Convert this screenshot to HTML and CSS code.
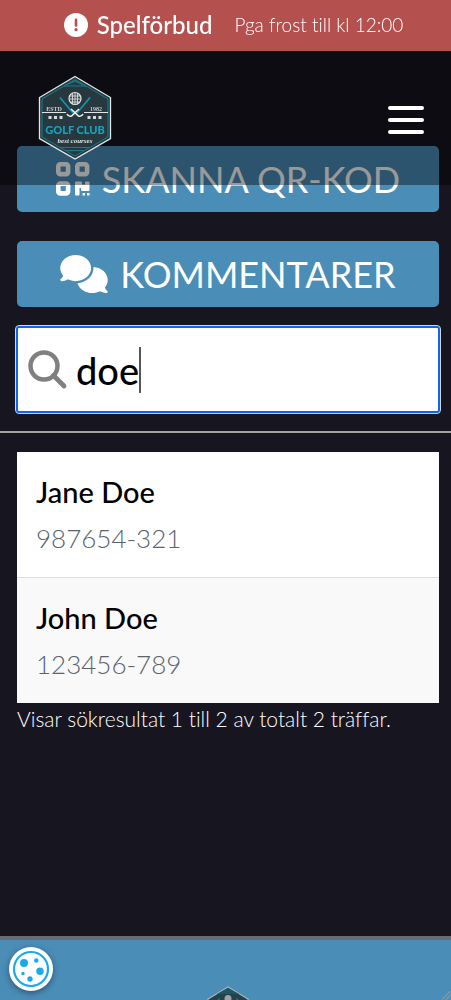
FILE: index.html
```html
<!DOCTYPE html>
<html lang="sv">
<head>
<meta charset="utf-8">
<meta name="viewport" content="width=device-width, initial-scale=1">
<title>Golf Club</title>
<link rel="stylesheet" href="styles.css">
</head>
<body>
<div class="top">
  <div class="alert" role="alert">
    <svg class="alert-icon" viewBox="0 0 24 24" aria-hidden="true"><circle cx="12" cy="12" r="12" fill="#fff"/><path d="M12 6.8v5.7" stroke="#b4514f" stroke-width="2.6" stroke-linecap="round"/><circle cx="12" cy="16.7" r="1.6" fill="#b4514f"/></svg>
    <strong class="alert-title">Spelförbud</strong>
    <span class="alert-text">Pga frost till kl 12:00</span>
  </div>
  <header class="header">
    <a class="brand" href="#" aria-label="Golf Club">
      <svg class="brand-logo" viewBox="8 5 74 85" aria-hidden="true">
        <path d="M45 6.5 80.5 27.5V68.500L45 89 9.500 68.500V27.500Z" fill="#27383f" stroke="#e4e8ea" stroke-width="1.3"/>
        <path d="M45 9.500 78 29V67L45 86 12 67V29Z" fill="none" stroke="#137e91" stroke-width="1"/>
        <path d="M34 16H56M38 14 45 11l7 3M34 16l11-5 11 5M30 77.500H60M35 80.500H55" fill="none" stroke="#137e91" stroke-width="1"/>
        <circle cx="45" cy="28.500" r="6" fill="#3a474c" stroke="#e1e5e6" stroke-width="1.200"/>
        <path d="M39.500 26h11M39 29h12M40 32h10M42.500 23v11M45 22.500v12M47.500 23v11" stroke="#d8dddf" stroke-width=".9"/>
        <path d="M30 27.500 43 43M60 27.500 47 43" stroke="#0c9bb5" stroke-width="1.600"/>
        <path d="M49 39 41.500 46q-3 1-4.500-2M41 39 48.500 46q3 1 4.500-2" fill="none" stroke="#eceeef" stroke-width="1.600"/>
        <path d="M12 42.500H36M54 42.500H78" stroke="#e0e5e7" stroke-width="1"/>
        <g fill="#d6dcde"><path d="M18.500 46h3v3h-3zM24 46h3v3h-3zM29.500 46h3v3h-3zM57.500 46h3v3h-3zM63 46h3v3h-3zM68.500 46h3v3h-3z"/></g>
        <g class="logo-small"><text x="24" y="41">ESTD</text><text x="66" y="41">1982</text></g>
        <text class="logo-name" x="45" y="64">GOLF CLUB</text>
        <text class="logo-script" x="45" y="73">best courses</text>
      </svg>
    </a>
    <button class="menu" type="button" aria-label="Meny"><span class="menu-line"></span><span class="menu-line"></span><span class="menu-line"></span></button>
  </header>
</div>

<main class="main">
  <div class="actions">
    <button class="action" type="button">
      <svg class="icon-qr" viewBox="0 0 34 34" aria-hidden="true"><g fill="none" stroke="#fff" stroke-width="4.600"><rect x="2.300" y="2.300" width="9.800" height="9.800" rx="2"/><rect x="21.300" y="2.300" width="9.800" height="9.800" rx="2"/><rect x="2.300" y="21.600" width="9.800" height="9.800" rx="2"/></g><path fill="#fff" d="M19 20.500q0-1 1-1h5q1 0 1 1v2h3v-2q0-1 1-1h2.500q1 0 1 1V28q0 1-1 1H26q-1 0-1-1v-2h-1.500v6.500q0 1-1 1H20q-1 0-1-1zM26.500 31h2.600v2.600h-2.600zM31 31h2.600v2.600H31z"/></svg>
      <span>SKANNA QR-KOD</span>
    </button>
    <button class="action" type="button">
      <svg class="icon-chat" viewBox="0 0 640 512" aria-hidden="true"><path fill="#fff" d="M208 352c114.900 0 208-78.800 208-176S322.900 0 208 0 0 78.800 0 176c0 38.600 14.700 74.300 39.600 103.400-3.500 9.400-8.700 17.700-14.200 24.700-4.800 6.200-9.700 11-13.300 14.300-1.800 1.600-3.300 2.900-4.300 3.700l-1.100.8C1 327.200-1.400 334.400.8 340.900S9.100 352 16 352c21.800 0 43.800-5.600 62.100-12.500 9.200-3.500 17.800-7.400 25.300-11.400C134.100 343.300 169.800 352 208 352zM448 176c0 112.300-99.100 196.900-216.500 207C255.800 457.400 336.400 512 432 512c38.200 0 73.900-8.700 104.700-23.900 7.500 4 16 7.900 25.200 11.400 18.300 6.900 40.300 12.500 62.100 12.500 6.900 0 13.100-4.500 15.200-11.100 2.100-6.600-.2-13.800-5.800-17.900l-1.100-.8c-1-.8-2.500-2-4.300-3.700-3.600-3.300-8.500-8.100-13.300-14.300-5.500-7-10.700-15.400-14.200-24.700 24.900-29 39.600-64.700 39.600-103.400 0-92.800-84.900-168.900-192.600-175.500.3 5.100.5 10.300.5 15.400z"/></svg>
      <span>KOMMENTARER</span>
    </button>
  </div>

  <label class="search">
    <svg class="search-icon" viewBox="0 0 40 40" aria-hidden="true"><circle cx="16" cy="16" r="13.500" fill="none" stroke="#808080" stroke-width="4.500"/><path d="M25.500 25.500 36 36" stroke="#808080" stroke-width="4.800" stroke-linecap="round"/></svg>
    <input class="search-input" type="text" value="doe" aria-label="Sök">
    <span class="caret"></span>
  </label>

  <hr class="rule">

  <ul class="results">
    <li class="result"><span class="result-name">Jane Doe</span><span class="result-id">987654-321</span></li>
    <li class="result"><span class="result-name">John Doe</span><span class="result-id">123456-789</span></li>
  </ul>
  <p class="summary">Visar sökresultat 1 till 2 av totalt 2 träffar.</p>
</main>

<footer class="footer">
  <svg class="footer-logo" viewBox="0 0 42 48" aria-hidden="true"><path d="M21 1 41 13V36L21 47 1 36V13Z" fill="#293f49" stroke="#9fb9c5" stroke-width="1.300"/><path d="M10 8 21 2 32 8Z" fill="#1a5866"/><circle cx="21" cy="12.500" r="3.500" fill="#9ba5aa"/><path d="M11 12.500 20 22M31 12.500 22 22" stroke="#137e91" stroke-width="1.500"/></svg>
  <svg class="footer-mark" viewBox="0 0 10 10" aria-hidden="true"><path d="M0 9.500 9.500 0M4 10 10 4" stroke="#8d979d" stroke-width="1.300"/></svg>
</footer>

<button class="cookie" type="button" aria-label="Cookie-inställningar">
  <svg class="cookie-icon" viewBox="0 0 44 44" aria-hidden="true"><circle cx="22" cy="22" r="17" fill="#fff" stroke="#1ca9e9" stroke-width="2.200"/><g fill="#1ca9e9"><circle cx="15" cy="16" r="4"/><circle cx="27.300" cy="13.500" r="2.200"/><circle cx="31" cy="24.300" r="3.700"/><circle cx="14" cy="26.500" r="1.700"/><circle cx="21" cy="32" r="2.700"/></g></svg>
</button>
</body>
</html>
```

FILE: styles.css
```css
* { box-sizing: border-box; }

body {
  margin: 0;
  height: 100vh;
  overflow: hidden;
  display: flex;
  flex-direction: column;
  background: #17151f;
  color: #fff;
  font-family: Lato, "Open Sans", sans-serif;
  font-variant-ligatures: none;
}

button { border: 0; padding: 0; font: inherit; color: inherit; cursor: pointer; }

.top { position: fixed; top: 0; left: 0; right: 0; z-index: 2; }

.alert {
  display: flex;
  align-items: center;
  justify-content: center;
  height: 51px;
  padding: 0 8px 2px 24px;
  background: #b4514f;
  white-space: nowrap;
}
.alert-icon { width: 24px; height: 24px; margin-right: 9px; }
.alert-title { font-size: 24px; font-weight: 500; margin-right: 22px; }
.alert-text { font-size: 19px; font-weight: 300; }

.header {
  display: flex;
  align-items: center;
  justify-content: space-between;
  height: 134px;
  padding: 0 27px 2px 38px;
  background: rgba(0, 0, 0, .4);
}
.brand { display: block; }
.brand-logo { display: block; width: 74px; height: 85px; }
.logo-small { font: 700 6px "Liberation Serif", serif; fill: #c5cccf; text-anchor: middle; }
.logo-name { font: 900 11px Lato, sans-serif; fill: #12a5bd; text-anchor: middle; }
.logo-script { font: italic 700 7px "Liberation Serif", serif; fill: #dde2e4; text-anchor: middle; }
.menu { display: grid; gap: 8px; width: 36px; margin-top: 6px; background: none; }
.menu-line { height: 4px; border-radius: 2px; background: #fff; }

.main { flex: 1; padding: 146px 12px 0 17px; }
.actions { display: grid; gap: 29px; }
.action {
  display: flex;
  align-items: center;
  justify-content: center;
  gap: 12px;
  height: 66px;
  border-radius: 5px;
  background: #4a8db7;
  font-size: 36px;
  font-weight: 400;
  white-space: nowrap;
}
.icon-qr { width: 34px; height: 34px; }
.icon-chat { width: 48px; height: 38px; }

.search {
  display: flex;
  align-items: center;
  height: 87px;
  margin: 19px -1px 0;
  padding: 0 10px;
  background: #fff;
  border: 2px solid #0a66f5;
  border-radius: 3px;
  outline: 1px solid #d8d8d8;
}
.search-icon { flex: none; width: 40px; height: 40px; margin-right: 8px; }
.search-input {
  field-sizing: content;
  min-width: 0;
  padding: 0;
  border: 0;
  outline: 0;
  background: none;
  color: #000;
  font: 500 38px Lato, sans-serif;
}
.caret { width: 2px; height: 46px; background: #555; }

.rule { height: 2px; margin: 18px -12px 19px -17px; border: 0; background: #a2a3a5; }

.results { margin: 0; padding: 0; list-style: none; background: #fff; }
.result { display: grid; gap: 12px; padding: 22px 19px 23px; }
.result + .result { border-top: 1px solid #dcdcdc; background: #f9f9f9; }
.result-name { color: #000; font-size: 29px; line-height: 36px; font-weight: 500; }
.result-id { color: #59636b; font-size: 26px; line-height: 32px; font-weight: 300; }
.summary { margin: 3px 0 0; color: #fff; font-size: 21px; line-height: 26px; font-weight: 300; }

.footer {
  flex: none;
  display: flex;
  align-items: flex-end;
  justify-content: center;
  height: 64px;
  padding-left: 4px;
  overflow: hidden;
  border-top: 4px solid #686b72;
  background: #4a8db7;
}
.footer-logo { flex: none; width: 42px; height: 48px; margin: 0 auto -34px; }
.footer-mark { position: absolute; right: 0; bottom: 0; width: 9px; height: 9px; }

.cookie {
  position: fixed;
  left: 9px;
  bottom: 9px;
  width: 44px;
  height: 44px;
  border-radius: 50%;
  background: #fff;
  box-shadow: 0 2px 6px rgba(0, 0, 0, .4);
}
.cookie-icon { display: block; width: 44px; height: 44px; }
```
